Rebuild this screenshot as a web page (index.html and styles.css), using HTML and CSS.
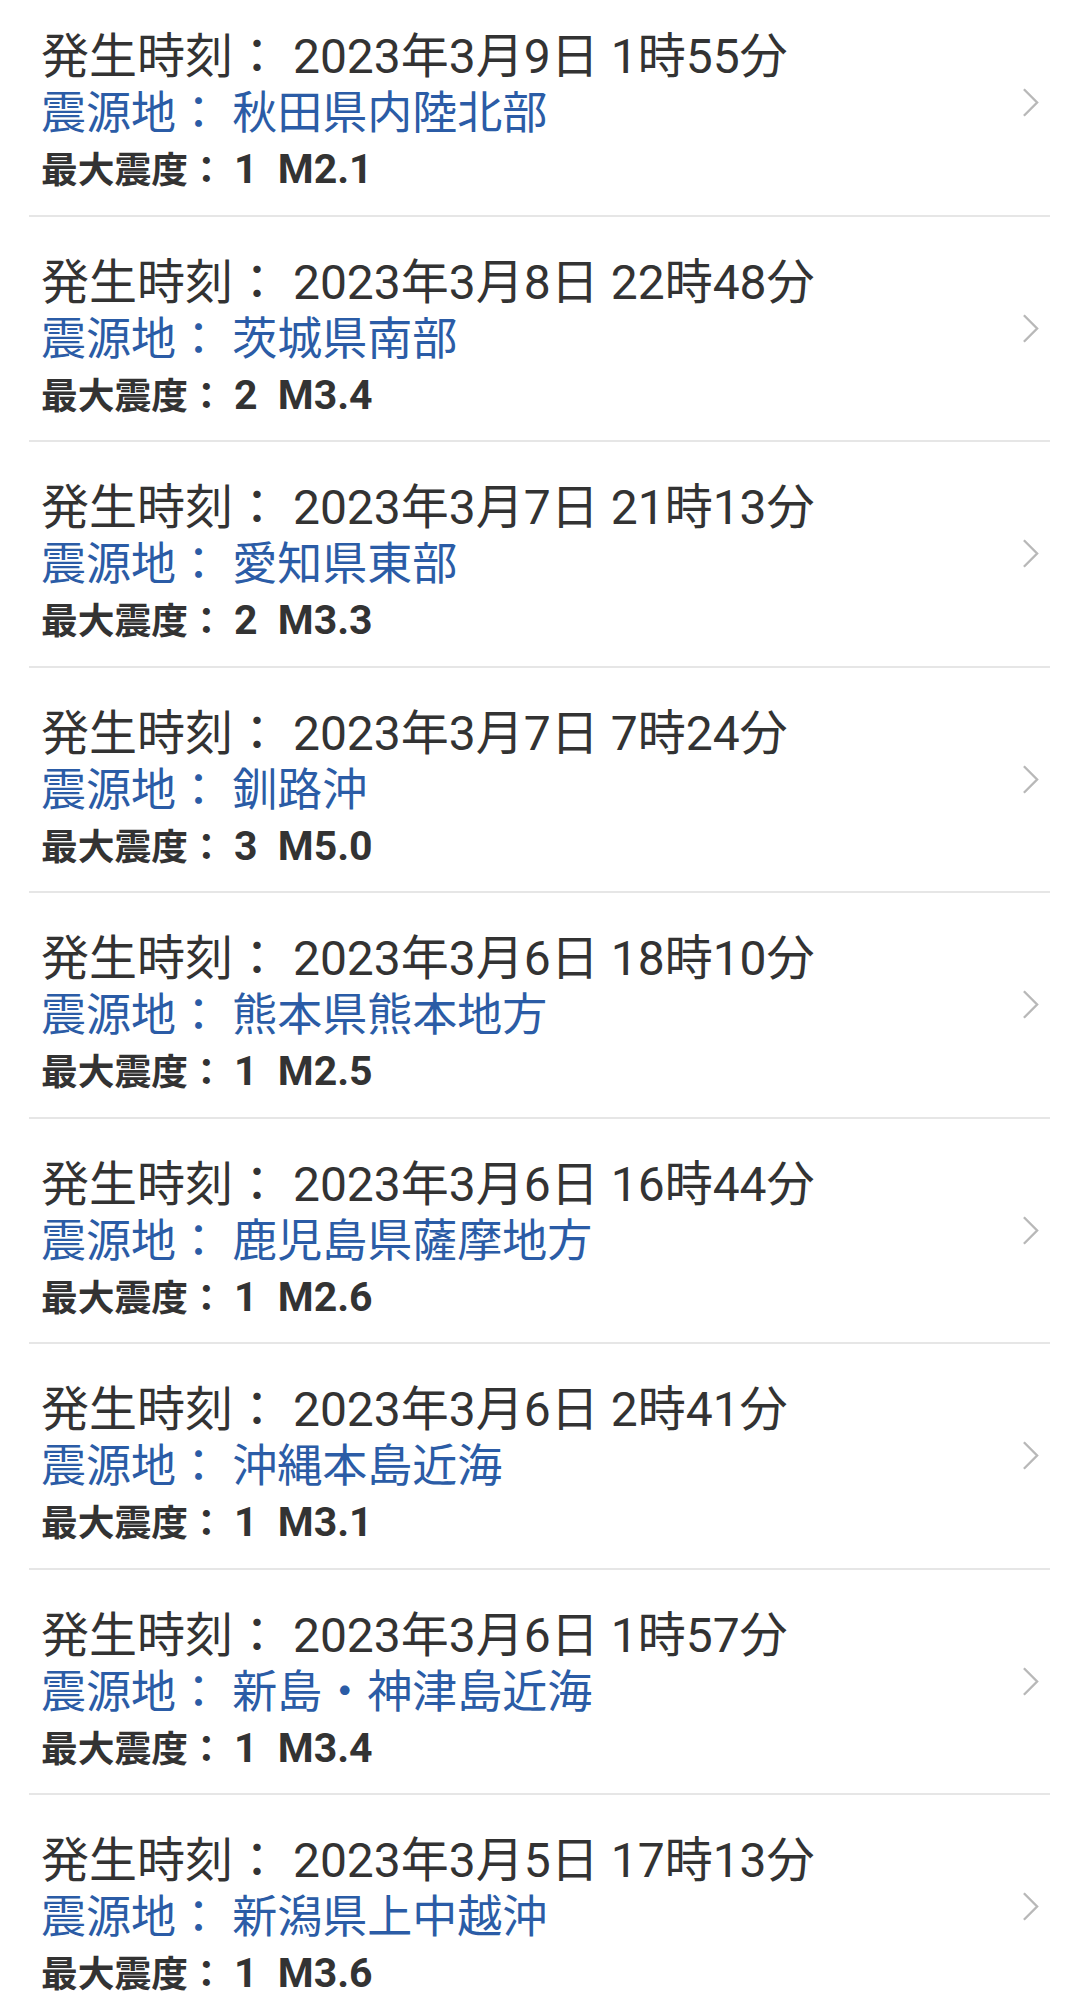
FILE: index.html
```html
<!DOCTYPE html>
<html lang="ja">
<head>
  <meta charset="UTF-8">
  <meta name="viewport" content="width=device-width, initial-scale=1.0">
  <title>地震情報</title>
  <link rel="stylesheet" href="styles.css">
</head>
<body>

<!-- Earthquake list -->
<ul class="quake-list">
  <li class="quake-item">
    <div class="quake-info">
      <p class="quake-time">発生時刻： 2023年3月9日 1時55分</p>
      <p class="quake-place">震源地： 秋田県内陸北部</p>
      <p class="quake-scale">最大震度： <span class="quake-num">1&nbsp; M2.1</span></p>
    </div>
    <svg class="chevron" viewBox="0 0 18 32"><polyline points="2,2 16,16 2,30"/></svg>
  </li>
  <li class="quake-item">
    <div class="quake-info">
      <p class="quake-time">発生時刻： 2023年3月8日 22時48分</p>
      <p class="quake-place">震源地： 茨城県南部</p>
      <p class="quake-scale">最大震度： <span class="quake-num">2&nbsp; M3.4</span></p>
    </div>
    <svg class="chevron" viewBox="0 0 18 32"><polyline points="2,2 16,16 2,30"/></svg>
  </li>
  <li class="quake-item">
    <div class="quake-info">
      <p class="quake-time">発生時刻： 2023年3月7日 21時13分</p>
      <p class="quake-place">震源地： 愛知県東部</p>
      <p class="quake-scale">最大震度： <span class="quake-num">2&nbsp; M3.3</span></p>
    </div>
    <svg class="chevron" viewBox="0 0 18 32"><polyline points="2,2 16,16 2,30"/></svg>
  </li>
  <li class="quake-item">
    <div class="quake-info">
      <p class="quake-time">発生時刻： 2023年3月7日 7時24分</p>
      <p class="quake-place">震源地： 釧路沖</p>
      <p class="quake-scale">最大震度： <span class="quake-num">3&nbsp; M5.0</span></p>
    </div>
    <svg class="chevron" viewBox="0 0 18 32"><polyline points="2,2 16,16 2,30"/></svg>
  </li>
  <li class="quake-item">
    <div class="quake-info">
      <p class="quake-time">発生時刻： 2023年3月6日 18時10分</p>
      <p class="quake-place">震源地： 熊本県熊本地方</p>
      <p class="quake-scale">最大震度： <span class="quake-num">1&nbsp; M2.5</span></p>
    </div>
    <svg class="chevron" viewBox="0 0 18 32"><polyline points="2,2 16,16 2,30"/></svg>
  </li>
  <li class="quake-item">
    <div class="quake-info">
      <p class="quake-time">発生時刻： 2023年3月6日 16時44分</p>
      <p class="quake-place">震源地： 鹿児島県薩摩地方</p>
      <p class="quake-scale">最大震度： <span class="quake-num">1&nbsp; M2.6</span></p>
    </div>
    <svg class="chevron" viewBox="0 0 18 32"><polyline points="2,2 16,16 2,30"/></svg>
  </li>
  <li class="quake-item">
    <div class="quake-info">
      <p class="quake-time">発生時刻： 2023年3月6日 2時41分</p>
      <p class="quake-place">震源地： 沖縄本島近海</p>
      <p class="quake-scale">最大震度： <span class="quake-num">1&nbsp; M3.1</span></p>
    </div>
    <svg class="chevron" viewBox="0 0 18 32"><polyline points="2,2 16,16 2,30"/></svg>
  </li>
  <li class="quake-item">
    <div class="quake-info">
      <p class="quake-time">発生時刻： 2023年3月6日 1時57分</p>
      <p class="quake-place">震源地： 新島・神津島近海</p>
      <p class="quake-scale">最大震度： <span class="quake-num">1&nbsp; M3.4</span></p>
    </div>
    <svg class="chevron" viewBox="0 0 18 32"><polyline points="2,2 16,16 2,30"/></svg>
  </li>
  <li class="quake-item">
    <div class="quake-info">
      <p class="quake-time">発生時刻： 2023年3月5日 17時13分</p>
      <p class="quake-place">震源地： 新潟県上中越沖</p>
      <p class="quake-scale">最大震度： <span class="quake-num">1&nbsp; M3.6</span></p>
    </div>
    <svg class="chevron" viewBox="0 0 18 32"><polyline points="2,2 16,16 2,30"/></svg>
  </li>
</ul>

</body>
</html>
```

FILE: styles.css
```css
/* General Styles */
body {
  font-family: Roboto, "Noto Sans CJK JP", sans-serif;
  background-color: #ffffff;
  margin: 0;
  padding: 0;
  overflow: hidden;
}

/* List (scrolled slightly) */
.quake-list {
  list-style: none;
  margin: -9px 30px 0 29px;
  padding: 0;
}

.quake-item {
  display: flex;
  align-items: center;
  justify-content: space-between;
  height: 225.5px;
  box-sizing: border-box;
  padding: 36px 11px 0 12px;
  border-bottom: 2px solid #e6e6e6;
}

.quake-info {
  align-self: flex-start;
}

.quake-info p {
  margin: 0;
  white-space: nowrap;
}

.quake-time {
  font-size: 48px;
  line-height: 59px;
  color: #333333;
}

.quake-place {
  font-size: 45px;
  line-height: 56px;
  color: #2b5ca6;
}

.quake-scale {
  font-size: 36.75px;
  line-height: 54px;
  font-weight: bold;
  color: #333333;
}

.quake-num {
  font-size: 41px;
}

/* Chevron */
.chevron {
  width: 17px;
  height: 31px;
  margin-top: -36px;
  fill: none;
  stroke: #b8b8b8;
  stroke-width: 2.5;
}
```
